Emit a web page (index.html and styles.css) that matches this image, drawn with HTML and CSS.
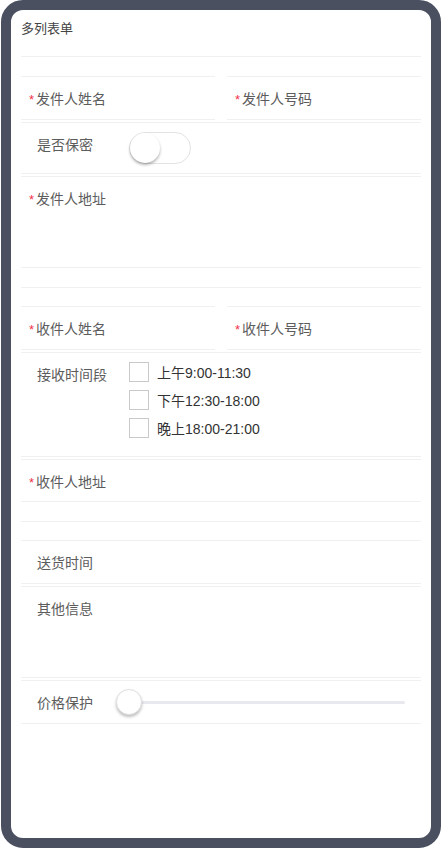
FILE: index.html
```html
<!DOCTYPE html>
<html lang="zh-CN">
<head>
  <meta charset="UTF-8">
  <meta name="viewport" content="width=device-width, initial-scale=1.0">
  <title>多列表单</title>
  <link rel="stylesheet" href="styles.css">
</head>
<body>
  <div class="phone">
    <div class="form-title">多列表单</div>

    <div class="cols">
      <div class="item item-cell">
        <label class="label required">发件人姓名</label>
      </div>
      <div class="item item-cell">
        <label class="label required">发件人号码</label>
      </div>
    </div>

    <div class="item item-switch">
      <label class="label">是否保密</label>
      <div class="switch">
        <span class="switch-knob"></span>
      </div>
    </div>

    <div class="item item-area">
      <label class="label required">发件人地址</label>
    </div>

    <div class="divider"></div>

    <div class="cols">
      <div class="item item-cell">
        <label class="label required">收件人姓名</label>
      </div>
      <div class="item item-cell">
        <label class="label required">收件人号码</label>
      </div>
    </div>

    <div class="item item-checks">
      <label class="label">接收时间段</label>
      <div class="checks">
        <label class="check"><input type="checkbox"><span>上午9:00-11:30</span></label>
        <label class="check"><input type="checkbox"><span>下午12:30-18:00</span></label>
        <label class="check"><input type="checkbox"><span>晚上18:00-21:00</span></label>
      </div>
    </div>

    <div class="item item-short">
      <label class="label required">收件人地址</label>
    </div>

    <div class="divider"></div>

    <div class="item item-cell">
      <label class="label">送货时间</label>
    </div>

    <div class="item item-area">
      <label class="label">其他信息</label>
    </div>

    <div class="item item-cell">
      <label class="label">价格保护</label>
      <div class="slider">
        <span class="slider-knob"></span>
      </div>
    </div>
  </div>
</body>
</html>
```

FILE: styles.css
```css
* {
    margin: 0;
    padding: 0;
    box-sizing: border-box;
}

body {
    background: #fff;
    font-family: "Noto Sans CJK SC", "Liberation Sans", sans-serif;
    font-size: 14px;
    color: #5c5c5c;
}

.phone {
    margin-left: 1px;
    width: 440px;
    height: 848px;
    border: 10px solid #4a5060;
    border-radius: 22px;
    padding: 0 10px;
    background: #fff;
}

.form-title {
    height: 47px;
    padding-top: 10px;
    line-height: 16px;
    font-size: 13px;
    color: #444;
    border-bottom: 1px solid #f0f0f0;
    margin-bottom: 19px;
}

.cols {
    display: grid;
    grid-template-columns: 1fr 1fr;
    column-gap: 12px;
}

.item {
    display: flex;
    border-top: 1px solid #f0f0f0;
    border-bottom: 1px solid #f0f0f0;
    margin-bottom: 2px;
}

.item-cell { height: 44px; }
.item-short { height: 43px; }
.item-switch { height: 52px; }
.item-area { height: 92px; }
.item-checks { height: 105px; }

.label {
    flex: none;
    width: 108px;
    padding: 13px 0 0 16px;
    line-height: 16px;
    white-space: nowrap;
}

.required::before {
    content: "*";
    color: #f0324b;
    font-family: "Liberation Sans", sans-serif;
    font-size: 13px;
    line-height: 0;
    margin-left: -8px;
    margin-right: 2px;
}

.divider {
    height: 18px;
    border-bottom: 1px solid #f0f0f0;
    margin-bottom: 18px;
}

/* 开关 */
.switch {
    margin-top: 9px;
    width: 62px;
    height: 32px;
    border: 1px solid #e3e3e3;
    border-radius: 16px;
    background: #fff;
}

.switch-knob {
    display: block;
    width: 30px;
    height: 30px;
    border-radius: 50%;
    background: #fff;
    box-shadow: 0 2px 3px rgba(0, 0, 0, 0.3);
}

/* 复选框 */
.checks {
    display: flex;
    flex-direction: column;
    gap: 8px;
    padding-top: 9px;
}

.check {
    display: flex;
    align-items: center;
    gap: 8px;
    height: 20px;
    color: #333;
    font-family: "Liberation Sans", "Noto Sans CJK SC", sans-serif;
}

.check input {
    appearance: none;
    width: 20px;
    height: 20px;
    border: 1px solid #c9c9c9;
    background: #fff;
}

/* 滑块 */
.slider {
    position: relative;
    flex: 1;
    margin: 20px 16px 0 0;
    height: 3px;
    background: #e8e8ef;
    border-radius: 2px;
}

.slider-knob {
    position: absolute;
    left: -13px;
    top: -12px;
    width: 26px;
    height: 26px;
    border-radius: 50%;
    background: #fff;
    border: 1px solid #e0e0e0;
    box-shadow: 0 2px 3px rgba(0, 0, 0, 0.25);
}
```
